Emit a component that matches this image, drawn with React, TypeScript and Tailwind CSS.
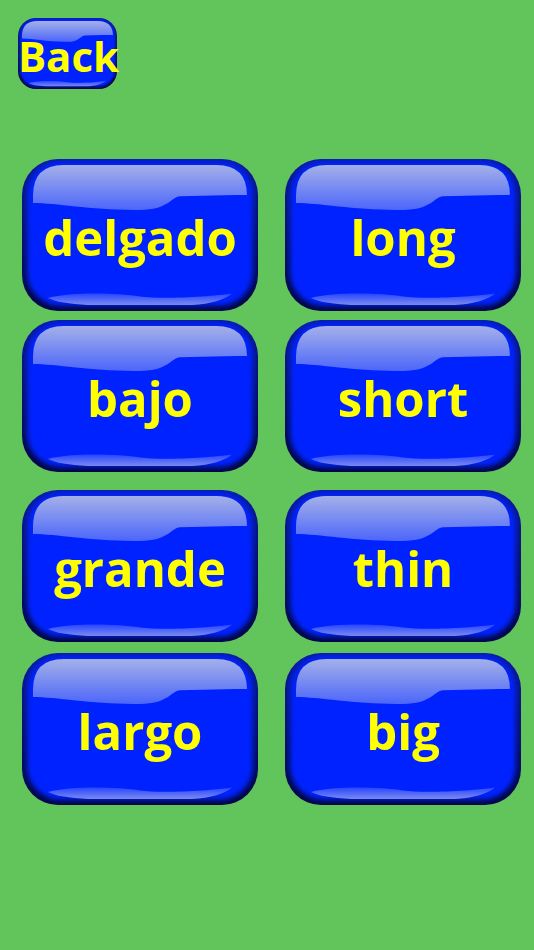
import { useId } from "react";

type GlossProps = {
  w: number;
  h: number;
  r: number;
};

// glossy blue button drawing, sized in px
function GlossBg({ w, h, r }: GlossProps) {
  const id = useId().replace(/:/g, "");
  const i = Math.round(w * 0.045);
  const ty = Math.max(3, Math.round(h * 0.04));
  const r2 = r * 0.85;
  const top = `M ${i} ${0.29 * h} L ${i} ${ty + r2} Q ${i} ${ty} ${i + r2} ${ty} L ${w - i - r2} ${ty} Q ${w - i} ${ty} ${w - i} ${ty + r2} L ${w - i} ${0.235 * h} L ${0.67 * w} ${0.245 * h} C ${0.63 * w} ${0.25 * h} ${0.62 * w} ${0.335 * h} ${0.5 * w} ${0.335 * h} C ${0.3 * w} ${0.34 * h} ${0.15 * w} ${0.29 * h} ${i} ${0.29 * h} Z`;
  const bottom = `M ${0.11 * w} ${0.915 * h} C ${0.2 * w} ${0.875 * h} ${0.4 * w} ${0.88 * h} ${0.5 * w} ${0.905 * h} C ${0.6 * w} ${0.925 * h} ${0.8 * w} ${0.905 * h} ${0.89 * w} ${0.885 * h} C ${0.86 * w} ${0.925 * h} ${0.8 * w} ${0.955 * h} ${0.72 * w} ${0.96 * h} L ${0.28 * w} ${0.96 * h} C ${0.2 * w} ${0.955 * h} ${0.14 * w} ${0.94 * h} ${0.11 * w} ${0.915 * h} Z`;

  return (
    <svg width={w} height={h} viewBox={`0 0 ${w} ${h}`} className="absolute inset-0">
      <defs>
        <linearGradient id={`o${id}`} x1="0" y1="0" x2="0" y2="1">
          <stop offset="0" stopColor="#0a1c9c" />
          <stop offset="1" stopColor="#000645" />
        </linearGradient>
        <linearGradient id={`t${id}`} x1="0" y1="0" x2="0" y2="1">
          <stop offset="0" stopColor="#a4b0e8" />
          <stop offset="1" stopColor="#4c66fb" />
        </linearGradient>
        <linearGradient id={`b${id}`} x1="0" y1="0" x2="0" y2="1">
          <stop offset="0" stopColor="#2e4cff" />
          <stop offset="1" stopColor="#8f9cf0" />
        </linearGradient>
        <clipPath id={`c${id}`}>
          <rect x="0" y="0" width={w} height={h} rx={r} ry={r} />
        </clipPath>
        <filter id={`f${id}`} x="-10%" y="-10%" width="120%" height="120%">
          <feGaussianBlur stdDeviation={Math.max(1.2, h * 0.016)} />
        </filter>
      </defs>
      <rect x="0" y="0" width={w} height={h} rx={r} ry={r} fill={`url(#o${id})`} />
      <g clipPath={`url(#c${id})`}>
        <rect
          x={w * 0.022}
          y={h * 0.015}
          width={w * 0.956}
          height={h * 0.95}
          rx={r * 0.92}
          ry={r * 0.92}
          fill="#0324fe"
          filter={`url(#f${id})`}
        />
      </g>
      <path d={top} fill={`url(#t${id})`} />
      <path d={bottom} fill={`url(#b${id})`} opacity="0.85" />
    </svg>
  );
}

function WordButton({ word }: { word: string }) {
  return (
    <div className="relative shrink-0 w-[236px] h-[152px] flex items-center justify-center">
      <GlossBg w={236} h={152} r={36} />
      <span className="relative pt-[6px] text-[49px] font-bold text-[#ffff00] font-['Open_Sans',sans-serif]">
        {word}
      </span>
    </div>
  );
}

export default function App() {
  const rows = [
    ["delgado", "long"],
    ["bajo", "short"],
    ["grande", "thin"],
    ["largo", "big"],
  ];
  const rowGap = ["mt-[70px]", "mt-[9px]", "mt-[18px]", "mt-[11px]"];

  return (
    <div className="w-[534px] h-[950px] bg-[#62c55b] overflow-hidden">
      {/* Back */}
      <div className="pt-[18px] pl-[18px]">
        <div className="relative w-[99px] h-[71px] flex items-center justify-center">
          <GlossBg w={99} h={71} r={18} />
          <span className="relative pt-[5px] pl-[2px] text-[42px] font-bold leading-none text-[#ffff00] font-['Open_Sans',sans-serif] whitespace-nowrap">
            Back
          </span>
        </div>
      </div>

      {/* Word grid */}
      <div className="pl-[22px]">
        {rows.map((row, idx) => (
          <div key={idx} className={`flex gap-[27px] ${rowGap[idx]}`}>
            {row.map((w) => (
              <WordButton key={w} word={w} />
            ))}
          </div>
        ))}
      </div>
    </div>
  );
}
